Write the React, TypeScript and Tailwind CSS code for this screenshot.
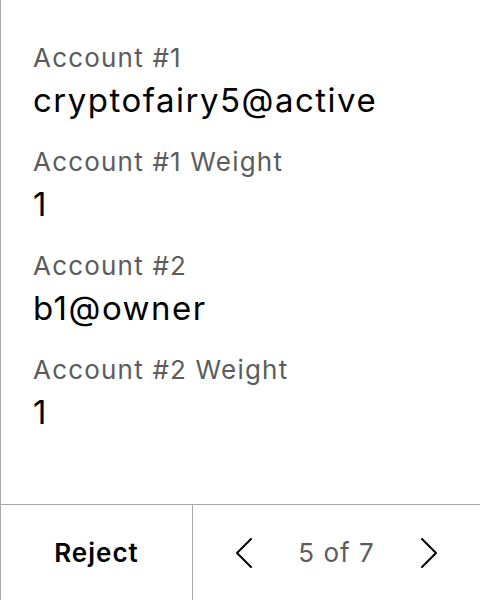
const fields = [
  { label: 'Account #1', value: 'cryptofairy5@active' },
  { label: 'Account #1 Weight', value: '1' },
  { label: 'Account #2', value: 'b1@owner' },
  { label: 'Account #2 Weight', value: '1' },
];

function Chevron({ dir }: { dir: 'left' | 'right' }) {
  return (
    <svg width="18" height="32" viewBox="0 0 18 32" fill="none" stroke="black" strokeWidth="2" strokeLinecap="round" strokeLinejoin="round">
      {dir === 'left' ? <polyline points="16,2 2,16 16,30" /> : <polyline points="2,2 16,16 2,30" />}
    </svg>
  );
}

export default function App() {
  return (
    <div className="w-[480px] h-[600px] bg-white border-l border-[#aaaaaa] flex flex-col font-['Inter',sans-serif]">
      {/* Fields */}
      <div className="flex-1 flex flex-col gap-[26px] pt-[42px] pl-[32px]">
        {fields.map((f) => (
          <div key={f.label} className="flex flex-col">
            <div className="text-[26px] leading-8 tracking-[1.2px] text-[#5c5c5c]">{f.label}</div>
            <div className="mt-[6px] text-[33px] leading-10 tracking-[1.5px] text-black">{f.value}</div>
          </div>
        ))}
      </div>

      {/* Bottom bar */}
      <div className="h-[96px] border-t border-[#aaaaaa] flex">
        <button className="w-[192px] border-r border-[#aaaaaa] flex items-center justify-center text-[26px] font-semibold tracking-[1px] text-black">
          Reject
        </button>
        <div className="flex-1 flex items-center justify-between px-[42px]">
          <Chevron dir="left" />
          <span className="text-[26px] tracking-[1px] text-[#5c5c5c]">5 of 7</span>
          <Chevron dir="right" />
        </div>
      </div>
    </div>
  );
}
